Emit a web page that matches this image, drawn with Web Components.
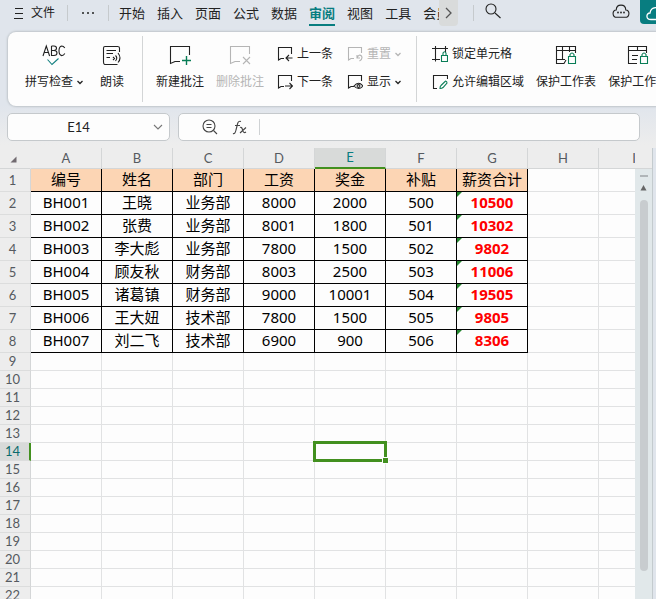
<!DOCTYPE html>
<html lang="zh-CN">
<head>
<meta charset="utf-8">
<title>工资表</title>
<style>
html, body { margin: 0; height: 100%; }
body { overflow: hidden; font: 12px/16px "Noto Sans", "Noto Sans CJK SC", sans-serif; color: #222; }
</style>
</head>
<body>
<sheet-app></sheet-app>
<script>
const define = (name, css, html) => {
  customElements.define(name, class extends HTMLElement {
    constructor() {
      super();
      const root = this.attachShadow({ mode: 'open' });
      root.innerHTML = `<style>*{box-sizing:border-box}button,input{font:inherit;color:inherit;border:0;background:none;padding:0;margin:0;outline:0}${css}</style>${html}`;
    }
  });
};

const note = 'M7 12.5H4L1.5 14V1.5H14.5V7';
const icons = {
  menu: [10, 12, '<path d="M1 1.5h8M1 6.5h8M0 11.5h9"/>'],
  dots: [14, 4, '<g fill="currentColor" stroke="none"><circle cx="2" cy="2" r="1"/><circle cx="7" cy="2" r="1"/><circle cx="12" cy="2" r="1"/></g>'],
  down: [6, 5, '<path d="M.5 1L3 3.5L5.5 1" stroke-width="1.3"/>'],
  wide: [10, 6, '<path d="M1 1l4 4 4-4" stroke="#777"/>'],
  right: [7, 12, '<path d="M1 1l5 5-5 5" stroke-width="1.3"/>'],
  search: [16, 16, '<circle cx="6" cy="6" r="5"/><path d="M10 10l5.5 5"/>'],
  cloud: [18, 14, '<path d="M5 13.3C-.2 13.3 0 6 4.2 6C4.5-.5 13.5-.5 13.8 6C18 6 18.2 13.3 13 13.3Z"/><g fill="currentColor" stroke="none"><circle cx="6" cy="8.5" r=".9"/><circle cx="9" cy="8.5" r=".9"/><circle cx="12" cy="8.5" r=".9"/></g>'],
  share: [22, 14, '<path d="M5 12.5C-.5 12.5 0 6 4 6C5-1 14-1 16 5C21 5 22 12.5 17 12.5Z" stroke-width="1.3"/>'],
  spell: [24, 22, '<path d="M1 12L4.3 2L7.6 12M2 8.5H6.6M9.5 2V11.5H12Q15 11.5 15 9Q15 6.5 12 6.5H9.5M12 6.5Q14.5 6.2 14.5 4.2Q14.5 2 12 2H9.5M22.8 4Q21.5 2 19.7 2Q17 2.5 17 6.8Q17 11 19.7 11.6Q21.5 11.6 22.8 9.5"/><path d="M5.5 15.500L10 20.5L16.5 14.5" stroke="#138080"/>'],
  read: [20, 20, '<path d="M17.5 7V3Q17.5 1.5 15.5 1.5H3Q1.5 1.500 1.5 3V17Q1.5 19.5 3 19.5H15.5M4.5 5.5H14M4.5 8.5H11M4.5 12.5H8"/><path d="M11 12l1.5 1.5-1.5 1.5M13.5 10.5Q16 13 13.5 16M16 8Q20 13 16 17.500"/>'],
  add: [22, 20, '<path d="M11 16.5H6L1.5 18.5V1.5H20.5V10"/><path d="M17.5 11v9M13 15.5h9" stroke="#087d56" stroke-width="1.4"/>'],
  del: [22, 20, '<path d="M11 16.5H6L1.5 18.5V1.5H20.5V9M14 12l7 7M21 12l-7 7"/>'],
  prev: [16, 16, '<path d="M7 12.5H4L1.5 14V1.5H14.5V8M15.5 12H9M12 9l-3 3 3 3"/>'],
  next: [16, 16, `<path d="${note}M8 12H15.5M12.5 9l3 3-3 3"/>`],
  reset: [16, 16, `<path d="${note}M10 9v3h3M10 12Q12 7.5 14.5 10Q16 13 12.5 15"/>`],
  show: [16, 16, `<path d="${note}M7 12Q11.5 6.5 16 12Q11.5 17 7 12Z"/><circle cx="11.5" cy="12" r="1.4"/>`],
  lock: [16, 18, '<path d="M3.5 1V16.5M0 3.5H16M13.5 1V7M0 14.500H8"/><path d="M9.5 10.5H15.5V16.5H9.5ZM11 10V8Q12.5 5.5 14 8V10" stroke="#087d56"/>'],
  edit: [16, 16, '<path d="M5 14.5H1.5V1.5H15.5V5"/><path d="M8 14.5Q8 12 9 11.5L13.500 7Q15 7 15 9L11 13.500Q10 14.5 8 14.5Z" stroke="#087d56"/>'],
  sheet: [22, 20, '<path d="M20.5 8V1.5H1.5V14.5H10M1.5 5.5H20.5M7.5 1.5V14.5M14.5 1.5V7M1.5 14.5V18.5H9L11 15"/><path d="M13.5 11.5H20.5V18.5H13.5ZM15 11.5V9.5Q17 6.5 19 9.5V11.5" stroke="#087d56"/>'],
  book: [22, 20, '<path d="M19.5 8V1.5H1.5V18.5H10M1.5 5.5H19.5M10.5 1.5V6M5 10.5H11M5 14.5H10"/><path d="M13.5 11.5H20.5V18.5H13.5ZM15 11.5V9.5Q17 6.5 19 9.5V11.5" stroke="#087d56"/>'],
  find: [16, 16, '<circle cx="7" cy="7" r="6"/><path d="M11.5 11.5l3.5 3.5M4.5 5.5h5M4.5 8.5h5"/>'],
  fx: [15, 15, '<path d="M1 13.5Q3 14.5 4 10L5.5 4Q6.3.5 9 1.5M3 5.5H8M8 7.5Q9.5 6.5 10.5 9.5Q11.5 14 14 12M14 7.5L8 13"/>'],
  corner: [7, 7, '<path d="M6.5.5v6h-6z" fill="#716a70" stroke="none"/>'],
  up: [7, 6, '<path d="M3.5 0L6.5 5.5H.5z" fill="#666" stroke="none"/>']
};

customElements.define('ui-icon', class extends HTMLElement {
  connectedCallback() {
    if (this.shadowRoot) return;
    const [w, h, body] = icons[this.getAttribute('name')];
    this.attachShadow({ mode: 'open' }).innerHTML =
      `<style>:host{display:inline-flex;flex:none}svg{display:block;fill:none;stroke:currentColor;stroke-width:1.1}</style>
      <svg aria-hidden="true" width="${w}" height="${h}" viewBox="0 0 ${w} ${h}">${body}</svg>`;
  }
});

define('big-tool', `:host{display:block;flex:none}:host([off]){color:#b5b5b5}
button{display:grid;justify-items:center;grid-template-rows:26px 16px;row-gap:6px;white-space:nowrap}
.i{display:flex;align-items:center}.t{display:flex;align-items:center;gap:4px}`,
  '<button><span class="i"><slot name="icon"></slot></span><span class="t"><slot></slot></span></button>');

define('small-tool', `:host{display:block;flex:none}:host([off]){color:#b5b5b5}
button{display:flex;align-items:center;gap:4px;height:16px;white-space:nowrap}`,
  '<button><slot></slot></button>');

define('menu-bar', `:host{display:flex;align-items:center;height:25px;flex:none;font-size:13px;margin-bottom:7px}
.file{display:flex;align-items:center;gap:7px;font-size:12px;margin-left:14px}
i{width:1px;height:16px;background:#c6cacd;flex:none}
.a{margin:0 12px 0 12px}.more{display:flex;margin:0 13px 0 1px}
nav{display:flex;gap:12px;margin-left:10px;flex:0 1 320px;overflow:hidden;height:26px;align-self:flex-start}
nav button{flex:none;height:26px;padding-top:2px;border-bottom:2px solid transparent}
nav .on{color:#087d80;font-weight:700;border-color:#087d80}
.go{width:19px;height:26px;display:grid;place-items:center;background:#d9dbdb;border-radius:0 0 4px 4px;color:#555;flex:none}
.b{margin:0 11px 0 15px}.c{margin-left:auto;margin-right:10px}
.s{align-self:flex-start;width:16px;height:24px;background:#087d80;color:#fff;border-radius:0 0 0 4px;overflow:hidden;padding:7px 0 0 6px;display:block}
button{display:block}`,
  `<button class="file"><ui-icon name="menu"></ui-icon>文件</button><i class="a"></i>
  <button class="more" aria-label="更多"><ui-icon name="dots"></ui-icon></button><i></i>
  <nav>${['开始','插入','页面','公式','数据','审阅','视图','工具','会员'].map(t => `<button${t === '审阅' ? ' class="on"' : ''}>${t}</button>`).join('')}</nav>
  <button class="go" aria-label="向右"><ui-icon name="right"></ui-icon></button><i class="b"></i>
  <button class="m" aria-label="搜索"><ui-icon name="search"></ui-icon></button>
  <button class="c" aria-label="云"><ui-icon name="cloud"></ui-icon></button>
  <button class="s" aria-label="分享"><ui-icon name="share"></ui-icon></button>`);

define('tool-ribbon', `:host{display:flex;flex:none;height:74px;margin-left:8px;padding:4px 0 4px 17px;background:#fdfdfd;border-radius:8px 0 0 8px;box-shadow:0 0 2px 1px #bfc5ca;overflow:hidden}
.g{display:flex;gap:12px;flex:none;padding-top:6px}.first{gap:17px}
.two{display:grid;gap:12px 14px;grid-template-columns:auto auto;align-content:start;padding:4px 0 0 1px}.one{grid-template-columns:auto}
hr{flex:none;width:1px;height:66px;border:0;margin:0 13px 0 18px;background:#d3d5d6}.r{margin:0 14px 0 15px}`,
  `<div class="g first"><big-tool><ui-icon slot="icon" name="spell"></ui-icon>拼写检查<ui-icon name="down"></ui-icon></big-tool>
  <big-tool><ui-icon slot="icon" name="read"></ui-icon>朗读</big-tool></div><hr>
  <div class="g"><big-tool><ui-icon slot="icon" name="add"></ui-icon>新建批注</big-tool>
  <big-tool off><ui-icon slot="icon" name="del"></ui-icon>删除批注</big-tool>
  <div class="two"><small-tool><ui-icon name="prev"></ui-icon>上一条</small-tool><small-tool off><ui-icon name="reset"></ui-icon>重置<ui-icon name="down"></ui-icon></small-tool>
  <small-tool><ui-icon name="next"></ui-icon>下一条</small-tool><small-tool><ui-icon name="show"></ui-icon>显示<ui-icon name="down"></ui-icon></small-tool></div></div><hr class="r">
  <div class="g"><div class="two one"><small-tool><ui-icon name="lock"></ui-icon>锁定单元格</small-tool><small-tool><ui-icon name="edit"></ui-icon>允许编辑区域</small-tool></div>
  <big-tool><ui-icon slot="icon" name="sheet"></ui-icon>保护工作表</big-tool>
  <big-tool><ui-icon slot="icon" name="book"></ui-icon>保护工作簿</big-tool></div>`);

define('formula-bar', `:host{display:flex;flex:none;gap:8px;padding:7px 16px 7px 7px}
div{display:flex;align-items:center;height:28px;background:#fdfdfd;border:1px solid #c5c9cc;border-radius:5px}
.n{width:163px;padding-right:6px}.n input{flex:1;min-width:0;padding-right:4px;text-align:center;font:13px Lato,sans-serif}
.f{flex:1;min-width:0;padding-left:23px;color:#444}.f input{flex:1;min-width:0}
.x{margin:0 12px 0 14px}i{width:1px;height:16px;background:#cfd2d4}button{display:flex}`,
  `<div class="n"><input aria-label="名称框" value="E14"><button aria-label="展开"><ui-icon name="wide"></ui-icon></button></div>
  <div class="f"><button aria-label="查找"><ui-icon name="find"></ui-icon></button><button class="x" aria-label="插入函数"><ui-icon name="fx"></ui-icon></button><i></i><input aria-label="编辑栏"></div>`);

const rows = [
  ['编号','姓名','部门','工资','奖金','补贴','薪资合计'],
  ['BH001','王晓','业务部','8000','2000','500','10500'],
  ['BH002','张费','业务部','8001','1800','501','10302'],
  ['BH003','李大彪','业务部','7800','1500','502','9802'],
  ['BH004','顾友秋','财务部','8003','2500','503','11006'],
  ['BH005','诸葛镇','财务部','9000','10001','504','19505'],
  ['BH006','王大妞','技术部','7800','1500','505','9805'],
  ['BH007','刘二飞','技术部','6900','900','506','8306']
];
const cols = [...'ABCDEFGHI'];
const line = n => {
  const data = rows[n - 1];
  const cells = cols.map((c, i) => {
    const filled = data && i < 7;
    const cls = !filled ? '' : n === 1 ? 'd h' : i === 6 ? 'd sum' : 'd';
    const sel = n === 14 && c === 'E';
    return `<td class="${sel ? 'sel' : cls}">${filled ? data[i] : sel ? '<b></b>' : ''}</td>`;
  }).join('');
  return `<tr class="${data ? 'tall' : ''}"><th scope="row" class="${n === 14 ? 'cur' : ''}">${n}</th>${cells}</tr>`;
};

define('sheet-grid', `:host{display:block;flex:1;min-width:0;overflow:hidden;background:#fdfdfd}
table{border-collapse:separate;border-spacing:0;table-layout:fixed;width:100%;min-width:670px}
.w0{width:31px}.w{width:71px}
th,td{padding:0;height:18px;line-height:17px;text-align:center;white-space:nowrap;border:0 solid #e1e2e3;border-width:0 1px 1px 0}
th{background:#ededed;color:#555a60;font:13px/17px Lato,sans-serif;border-color:#d4d6d7}
tbody th{padding-right:5px;border-bottom-color:#dcdddd}
thead th{height:21px;line-height:20px}thead th:first-child{text-align:left;padding-left:10px;border-right-color:#ededed}
thead .cur{background:#d8dad9;color:#087d80;border-bottom:2px solid #42901f;line-height:19px}
tbody .cur{background:#d8dad9;color:#0a6b6c;border-right:2px solid #42901f;padding-right:4px}
.tall th{height:23px;line-height:22px}.tall td{height:23px;line-height:20px;padding-bottom:2px}
.d{font-size:15px;color:#000;border-color:#000}.h{background-color:#fcd5b4}
.sum{color:#f00;font-weight:700;background:linear-gradient(135deg,#24862f 3px,transparent 4px)}
.sel{position:relative}.sel b{position:absolute;inset:-2px;border:3px solid #42901f}
.sel b::after{content:"";position:absolute;right:-4px;bottom:-4px;width:5px;height:5px;background:#42901f;box-shadow:0 0 0 1px #fdfdfd}`,
  `<table><colgroup><col class="w0">${cols.slice(0, 8).map(() => '<col class="w">').join('')}<col></colgroup>
  <thead><tr><th aria-label="全选"><ui-icon name="corner"></ui-icon></th>${cols.map(c => `<th scope="col"${c === 'E' ? ' class="cur"' : ''}>${c}</th>`).join('')}</tr></thead>
  <tbody>${Array.from({ length: 22 }, (_, i) => line(i + 1)).join('')}</tbody></table>`);

define('scroll-rail', `:host{display:flex;flex-direction:column;align-items:center;flex:none;width:21px;padding:0 4px 28px 0;background:linear-gradient(90deg,#e1e8ea 17px,#c4cbce 17px 18px,#e0e5ec 18px)}
.top{align-self:stretch;height:21px;flex:none;background:#ededed;border-bottom:1px solid #d4d6d7}
.dash{width:8px;height:2px;margin:6px 0 8px;background:#b0b5b8;flex:none}
.bar{width:8px;flex:1;margin-top:9px;border-radius:4px;background:#c8cccf}button{display:flex}`,
  `<span class="top"></span><span class="dash"></span><button aria-label="向上滚动"><ui-icon name="up"></ui-icon></button><span class="bar"></span>`);

define('sheet-app', `:host{display:flex;flex-direction:column;height:100vh;overflow:hidden;background:linear-gradient(#e0e5ec 0 105px,#ededed 145px)}
main{display:flex;flex:1;min-height:0}`,
  `<menu-bar></menu-bar><tool-ribbon></tool-ribbon><formula-bar></formula-bar><main><sheet-grid></sheet-grid><scroll-rail></scroll-rail></main>`);
</script>
</body>
</html>
